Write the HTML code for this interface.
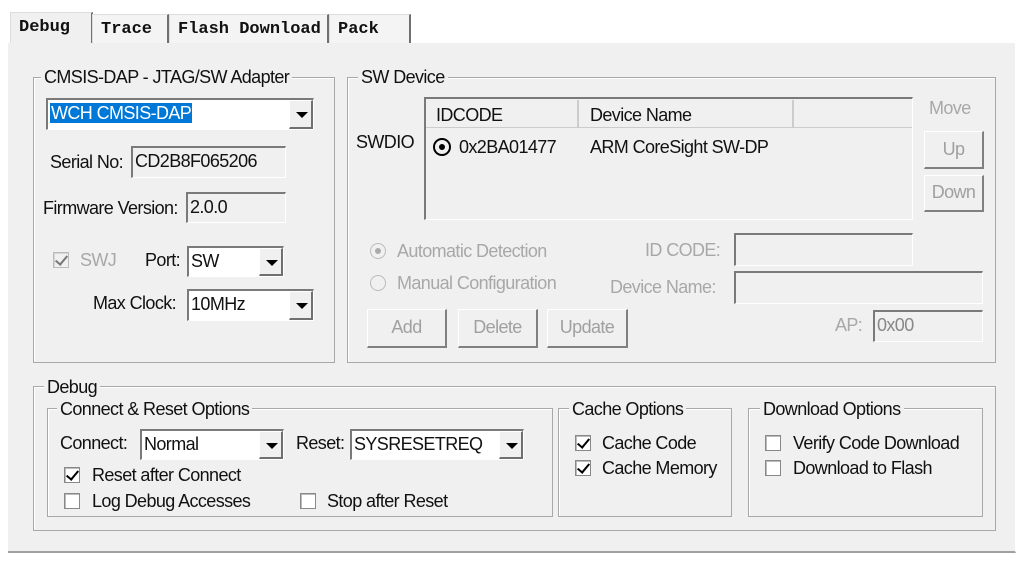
<!DOCTYPE html>
<html><head><meta charset="utf-8"><style>
*{box-sizing:border-box;margin:0;padding:0}
body{width:1025px;height:561px;background:#fff;position:relative;overflow:hidden;font-family:"Liberation Sans",sans-serif;font-size:18px;letter-spacing:-0.6px;color:#111}
.a{position:absolute;white-space:nowrap}
.bg{position:absolute;left:8px;top:42px;width:1008px;height:511px;background:#f0f0f0;border-bottom:2px solid #a0a0a0;border-right:1px solid #fff}
.tab{position:absolute;top:14px;height:29px;font-family:"Liberation Mono",monospace;font-weight:bold;font-size:17px;letter-spacing:0;padding:5px 0 0 8px;border-left:1px solid #ddd;border-right:2px solid #707070;border-top:1px solid #ddd;background:#f4f4f4}
.grp{position:absolute;border:1px solid #a8a8a8;box-shadow:inset 1px 1px 0 #fff}
.gt{position:absolute;background:#f0f0f0;padding:0 3px;line-height:20px}
.sunk{position:absolute;border-top:2px solid #7a7a7a;border-left:2px solid #7a7a7a;border-bottom:1px solid #fff;border-right:1px solid #fff;background:#f0f0f0;padding-left:2px;line-height:26px}
.white{background:#fff}
.arr{position:absolute;right:0;top:0;bottom:0;width:24px;background:#f0f0f0;border-right:2px solid #707070;border-bottom:2px solid #707070;border-top:1px solid #fff;border-left:1px solid #fff}
.arr:after{content:"";position:absolute;left:6px;top:11px;border-left:6px solid transparent;border-right:6px solid transparent;border-top:6px solid #000}
.btn{position:absolute;background:#f0f0f0;border-top:1px solid #fff;border-left:1px solid #fff;border-right:2px solid #808080;border-bottom:2px solid #808080;color:#a0a0a0;text-align:center}
.cb{position:absolute;width:16px;height:16px;border:1px solid #888;background:#fff;box-shadow:inset 1px 1px 0 #bbb}
.cb.on:after{content:"";position:absolute;left:4px;top:0px;width:5px;height:10px;border-right:2px solid #000;border-bottom:2px solid #000;transform:rotate(40deg)}
.gray{color:#a8a8a8}
</style></head><body>
<div class="bg"></div>
<div style="position:absolute;left:8px;top:42px;width:1008px;height:1px;background:#fff"></div>
<div class="tab" style="left:10px;width:83px;top:12px;height:31px;background:#f0f0f0;border-bottom:none">Debug</div>
<div class="tab" style="left:92px;width:77px">Trace</div>
<div class="tab" style="left:169px;width:160px">Flash Download</div>
<div class="tab" style="left:329px;width:82px">Pack</div>

<div class="grp" style="left:33px;top:77px;width:302px;height:286px"></div>
<div class="gt a" style="left:41px;top:67px">CMSIS-DAP - JTAG/SW Adapter</div>
<div class="sunk white" style="left:46px;top:98px;width:268px;height:32px"><span style="background:#0078d7;color:#fff;padding:0 1px">WCH CMSIS-DAP</span><div class="arr"></div></div>
<div class="a" style="left:50px;top:152px">Serial No:</div>
<div class="sunk" style="left:131px;top:146px;width:155px;height:32px">CD2B8F065206</div>
<div class="a" style="left:43px;top:198px">Firmware Version:</div>
<div class="sunk" style="left:186px;top:192px;width:100px;height:31px">2.0.0</div>
<div class="cb on" style="left:53px;top:252px;background:#f0f0f0;opacity:.5"></div>
<div class="a gray" style="left:80px;top:250px">SWJ</div>
<div class="a" style="left:145px;top:250px">Port:</div>
<div class="sunk white" style="left:187px;top:246px;width:97px;height:31px">SW<div class="arr"></div></div>
<div class="a" style="left:93px;top:293px">Max Clock:</div>
<div class="sunk white" style="left:187px;top:289px;width:127px;height:32px">10MHz<div class="arr"></div></div>

<div class="grp" style="left:347px;top:77px;width:649px;height:286px"></div>
<div class="gt a" style="left:358px;top:67px">SW Device</div>
<div class="a" style="left:356px;top:132px">SWDIO</div>
<div class="sunk" style="left:424px;top:97px;width:489px;height:123px;padding:0"></div>
<div class="a" style="left:426px;top:100px;width:486px;height:28px;border-bottom:1px solid #ccc"></div>
<div class="a" style="left:577px;top:100px;width:2px;height:27px;background:#ccc"></div>
<div class="a" style="left:792px;top:100px;width:2px;height:27px;background:#ccc"></div>
<div class="a" style="left:436px;top:105px">IDCODE</div>
<div class="a" style="left:590px;top:105px">Device Name</div>
<div class="a" style="left:433px;top:138px;width:18px;height:18px;border:2px solid #000;border-radius:50%"><div style="position:absolute;left:4px;top:4px;width:6px;height:6px;border-radius:50%;background:#000"></div></div>
<div class="a" style="left:459px;top:137px">0x2BA01477</div>
<div class="a" style="left:590px;top:137px">ARM CoreSight SW-DP</div>
<div class="a gray" style="left:929px;top:98px">Move</div>
<div class="btn" style="left:924px;top:131px;width:60px;height:38px;line-height:34px">Up</div>
<div class="btn" style="left:924px;top:175px;width:60px;height:37px;line-height:33px">Down</div>
<div class="a" style="left:370px;top:243px;width:16px;height:16px;border:1px solid #bbb;border-radius:50%;background:#f0f0f0"><div style="position:absolute;left:4px;top:4px;width:6px;height:6px;border-radius:50%;background:#aaa"></div></div>
<div class="a gray" style="left:397px;top:241px">Automatic Detection</div>
<div class="a" style="left:370px;top:275px;width:16px;height:16px;border:1px solid #bbb;border-radius:50%;background:#f0f0f0"></div>
<div class="a gray" style="left:397px;top:273px">Manual Configuration</div>
<div class="a gray" style="left:645px;top:240px">ID CODE:</div>
<div class="sunk" style="left:734px;top:233px;width:179px;height:33px"></div>
<div class="a gray" style="left:610px;top:277px">Device Name:</div>
<div class="sunk" style="left:734px;top:271px;width:249px;height:33px"></div>
<div class="btn" style="left:367px;top:309px;width:80px;height:39px;line-height:35px">Add</div>
<div class="btn" style="left:458px;top:309px;width:80px;height:39px;line-height:35px">Delete</div>
<div class="btn" style="left:547px;top:309px;width:81px;height:39px;line-height:35px">Update</div>
<div class="a gray" style="left:835px;top:315px">AP:</div>
<div class="sunk" style="left:873px;top:310px;width:110px;height:32px;color:#888">0x00</div>

<div class="grp" style="left:33px;top:386px;width:963px;height:145px"></div>
<div class="gt a" style="left:44px;top:377px">Debug</div>
<div class="grp" style="left:47px;top:408px;width:506px;height:109px"></div>
<div class="gt a" style="left:57px;top:399px">Connect &amp; Reset Options</div>
<div class="a" style="left:60px;top:433px">Connect:</div>
<div class="sunk white" style="left:140px;top:429px;width:144px;height:31px">Normal<div class="arr"></div></div>
<div class="a" style="left:296px;top:433px">Reset:</div>
<div class="sunk white" style="left:350px;top:429px;width:174px;height:31px">SYSRESETREQ<div class="arr"></div></div>
<div class="cb on" style="left:64px;top:467px"></div>
<div class="a" style="left:92px;top:465px">Reset after Connect</div>
<div class="cb" style="left:64px;top:493px"></div>
<div class="a" style="left:92px;top:491px">Log Debug Accesses</div>
<div class="cb" style="left:300px;top:493px"></div>
<div class="a" style="left:327px;top:491px">Stop after Reset</div>

<div class="grp" style="left:558px;top:408px;width:174px;height:109px"></div>
<div class="gt a" style="left:569px;top:399px">Cache Options</div>
<div class="cb on" style="left:575px;top:435px"></div>
<div class="a" style="left:602px;top:433px">Cache Code</div>
<div class="cb on" style="left:575px;top:460px"></div>
<div class="a" style="left:602px;top:458px">Cache Memory</div>

<div class="grp" style="left:748px;top:408px;width:235px;height:109px"></div>
<div class="gt a" style="left:760px;top:399px">Download Options</div>
<div class="cb" style="left:765px;top:435px"></div>
<div class="a" style="left:793px;top:433px">Verify Code Download</div>
<div class="cb" style="left:765px;top:460px"></div>
<div class="a" style="left:793px;top:458px">Download to Flash</div>
</body></html>
